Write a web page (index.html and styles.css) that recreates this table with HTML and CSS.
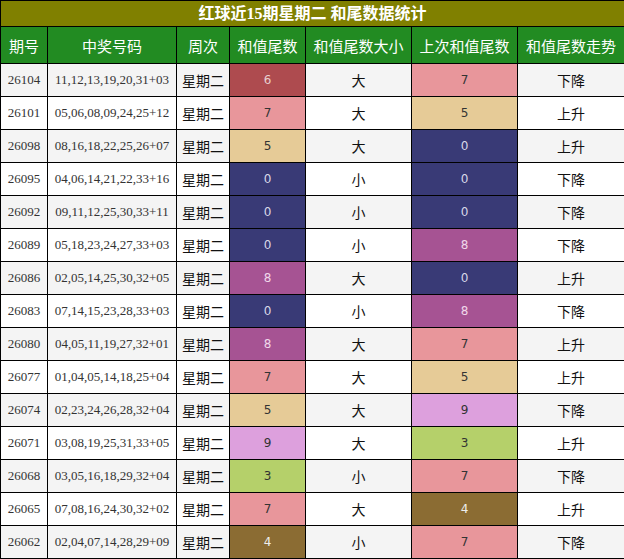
FILE: index.html
```html
<!DOCTYPE html>
<html lang="zh">
<head>
<meta charset="utf-8">
<link rel="stylesheet" href="styles.css">
</head>
<body>
<table class="stats">
  <colgroup>
    <col class="c1"><col class="c2"><col class="c3"><col class="c4"><col class="c5"><col class="c6"><col class="c7">
  </colgroup>
  <thead>
    <tr class="title"><th colspan="7">红球近15期星期二 和尾数据统计</th></tr>
    <tr class="head">
      <th>期号</th><th>中奖号码</th><th>周次</th><th>和值尾数</th><th>和值尾数大小</th><th>上次和值尾数</th><th>和值尾数走势</th>
    </tr>
  </thead>
  <tbody>
    <tr><td class="num">26104</td><td class="num">11,12,13,19,20,31+03</td><td class="cn">星期二</td><td class="d d6">6</td><td class="cn">大</td><td class="d d7">7</td><td class="cn">下降</td></tr>
    <tr><td class="num">26101</td><td class="num">05,06,08,09,24,25+12</td><td class="cn">星期二</td><td class="d d7">7</td><td class="cn">大</td><td class="d d5">5</td><td class="cn">上升</td></tr>
    <tr><td class="num">26098</td><td class="num">08,16,18,22,25,26+07</td><td class="cn">星期二</td><td class="d d5">5</td><td class="cn">大</td><td class="d d0">0</td><td class="cn">上升</td></tr>
    <tr><td class="num">26095</td><td class="num">04,06,14,21,22,33+16</td><td class="cn">星期二</td><td class="d d0">0</td><td class="cn">小</td><td class="d d0">0</td><td class="cn">下降</td></tr>
    <tr><td class="num">26092</td><td class="num">09,11,12,25,30,33+11</td><td class="cn">星期二</td><td class="d d0">0</td><td class="cn">小</td><td class="d d0">0</td><td class="cn">下降</td></tr>
    <tr><td class="num">26089</td><td class="num">05,18,23,24,27,33+03</td><td class="cn">星期二</td><td class="d d0">0</td><td class="cn">小</td><td class="d d8">8</td><td class="cn">下降</td></tr>
    <tr><td class="num">26086</td><td class="num">02,05,14,25,30,32+05</td><td class="cn">星期二</td><td class="d d8">8</td><td class="cn">大</td><td class="d d0">0</td><td class="cn">上升</td></tr>
    <tr><td class="num">26083</td><td class="num">07,14,15,23,28,33+03</td><td class="cn">星期二</td><td class="d d0">0</td><td class="cn">小</td><td class="d d8">8</td><td class="cn">下降</td></tr>
    <tr><td class="num">26080</td><td class="num">04,05,11,19,27,32+01</td><td class="cn">星期二</td><td class="d d8">8</td><td class="cn">大</td><td class="d d7">7</td><td class="cn">上升</td></tr>
    <tr><td class="num">26077</td><td class="num">01,04,05,14,18,25+04</td><td class="cn">星期二</td><td class="d d7">7</td><td class="cn">大</td><td class="d d5">5</td><td class="cn">上升</td></tr>
    <tr><td class="num">26074</td><td class="num">02,23,24,26,28,32+04</td><td class="cn">星期二</td><td class="d d5">5</td><td class="cn">大</td><td class="d d9">9</td><td class="cn">下降</td></tr>
    <tr><td class="num">26071</td><td class="num">03,08,19,25,31,33+05</td><td class="cn">星期二</td><td class="d d9">9</td><td class="cn">大</td><td class="d d3">3</td><td class="cn">上升</td></tr>
    <tr><td class="num">26068</td><td class="num">03,05,16,18,29,32+04</td><td class="cn">星期二</td><td class="d d3">3</td><td class="cn">小</td><td class="d d7">7</td><td class="cn">下降</td></tr>
    <tr><td class="num">26065</td><td class="num">07,08,16,24,30,32+02</td><td class="cn">星期二</td><td class="d d7">7</td><td class="cn">大</td><td class="d d4">4</td><td class="cn">上升</td></tr>
    <tr><td class="num">26062</td><td class="num">02,04,07,14,28,29+09</td><td class="cn">星期二</td><td class="d d4">4</td><td class="cn">小</td><td class="d d7">7</td><td class="cn">下降</td></tr>
  </tbody>
</table>
</body>
</html>
```
FILE: styles.css
```css
html, body {
  margin: 0;
  padding: 0;
  background: #ffffff;
}

.stats {
  border-collapse: collapse;
  table-layout: fixed;
  width: 624px;
  font-family: "Liberation Serif", "Noto Sans CJK SC", serif;
  color: #333333;
}

.c1 { width: 47px; }
.c2 { width: 129px; }
.c3 { width: 53px; }
.c4 { width: 76px; }
.c5 { width: 106px; }
.c6 { width: 106px; }
.c7 { width: 107px; }

.stats th,
.stats td {
  border: 1px solid #000000;
  padding: 0;
  text-align: center;
  vertical-align: middle;
  overflow: hidden;
  white-space: nowrap;
}

.title th {
  height: 25px;
  background: #808000;
  color: #ffffff;
  font-size: 16px;
  font-weight: bold;
  line-height: 20px;
}

.head th {
  height: 36px;
  background: #228b22;
  color: #ffffff;
  font-family: "Noto Sans CJK SC", sans-serif;
  font-size: 15px;
  font-weight: normal;
}

.stats tbody td {
  height: 32px;
}

.stats tbody tr:nth-child(odd) {
  background: #f4f4f4;
}

.stats tbody tr:nth-child(even) {
  background: #ffffff;
}

.num {
  font-size: 13px;
  color: #333333;
}

.cn {
  font-family: "Noto Sans CJK SC", sans-serif;
  font-size: 14px;
  color: #111111;
}

.d {
  font-family: "DejaVu Sans", sans-serif;
  font-size: 12px;
}

.d0 { background: #393a76; color: #d8d8e8; }
.d3 { background: #b5d06a; color: #333333; }
.d4 { background: #8b6c33; color: #eeeeee; }
.d5 { background: #e6cb97; color: #333333; }
.d6 { background: #ae4b4f; color: #e8d0d0; }
.d7 { background: #e8969b; color: #333333; }
.d8 { background: #a65393; color: #f0d8ea; }
.d9 { background: #dda0dd; color: #333333; }
```
